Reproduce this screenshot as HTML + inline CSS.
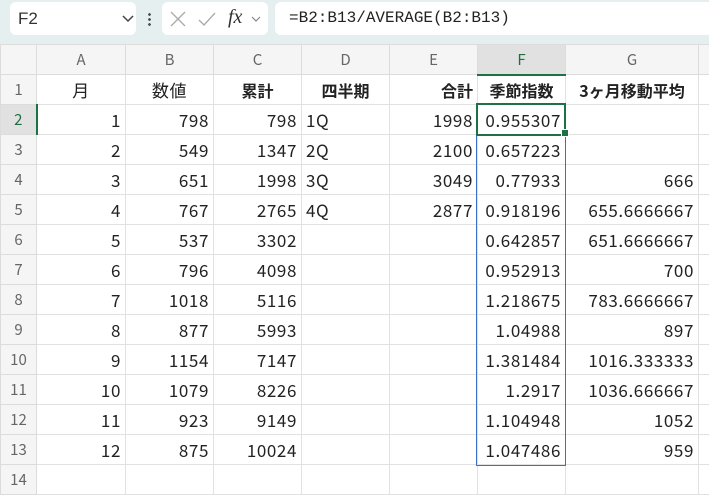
<!DOCTYPE html><html><head><meta charset="utf-8"><style>
body{margin:0;width:709px;height:473px;overflow:hidden;background:#fff;font-family:"Liberation Sans","Noto Sans CJK JP",sans-serif;position:relative}
.bar{position:absolute;left:0;top:0;width:709px;height:44px;background:#e6eff0}
.box{position:absolute;top:2px;height:33px;background:#fff;border-radius:6px}
table{position:absolute;left:0;top:44px;border-collapse:collapse;table-layout:fixed;width:718px}
td{height:30px;border:1px solid #e1e1e1;padding:0 4px;font-size:17px;letter-spacing:0.6px;color:#222;white-space:nowrap;overflow:hidden;text-align:right;font-family:"Noto Sans CJK JP",sans-serif;box-sizing:border-box}
tr.h td{background:#f5f5f5;color:#666;text-align:center;font-size:15px;letter-spacing:0;border-color:#dcdcdc}
td.rh{background:#f5f5f5;color:#666;text-align:center;font-size:15px;letter-spacing:0;border-color:#dcdcdc;padding:0}
td.c{text-align:center}td.l{text-align:left}td.b{font-weight:bold;text-align:center;letter-spacing:0;font-size:16px}
</style></head><body>
<div class="bar">
<div class="box" style="left:10px;width:126px"><span style="position:absolute;left:8px;top:7px;font-size:17px;color:#333">F2</span><svg style="position:absolute;left:112px;top:13px" width="12" height="8"><path d="M1 1l5 5 5-5" stroke="#444" fill="none" stroke-width="1.5"/></svg></div>
<div style="position:absolute;left:148px;top:12px;width:3px;height:14px;background:radial-gradient(circle,#555 1.3px,transparent 1.5px) 0 0/3px 5px"></div>
<div class="box" style="left:162px;width:106px"><svg style="position:absolute;left:8px;top:9px" width="16" height="16"><path d="M1 1l14 14M15 1L1 15" stroke="#aaa" stroke-width="1.3"/></svg><svg style="position:absolute;left:36px;top:9px" width="18" height="16"><path d="M1 9l5 5L17 2" stroke="#aaa" fill="none" stroke-width="1.3"/></svg><span style="position:absolute;left:66px;top:4px;font-family:'Liberation Serif',serif;font-style:italic;font-size:20px;color:#333">fx</span><svg style="position:absolute;left:89px;top:14px" width="10" height="7"><path d="M1 1l4 4 4-4" stroke="#888" fill="none" stroke-width="1.2"/></svg></div>
<div class="box" style="left:275px;width:440px"><span style="position:absolute;left:14px;top:7px;font-family:'Liberation Mono',monospace;font-size:16px;color:#222">=B2:B13/AVERAGE(B2:B13)</span></div>
</div>
<table>
<colgroup><col style="width:36px"><col style="width:89px"><col style="width:88px"><col style="width:88px"><col style="width:88px"><col style="width:88px"><col style="width:88px"><col style="width:133px"><col style="width:20px"></colgroup>
<tr class="h"><td style="background:#f5f5f5"></td><td>A</td><td>B</td><td>C</td><td>D</td><td>E</td><td style="background:#e1e1e1;color:#1e6e3e;border-bottom:2px solid #1e7145">F</td><td>G</td><td></td></tr>
<tr><td class="rh">1</td><td class="c">月</td><td class="c">数値</td><td class="b">累計</td><td class="b">四半期</td><td class="b" style="text-align:right">合計</td><td class="b">季節指数</td><td class="b">3ヶ月移動平均</td><td></td></tr>
<tr><td class="rh" style="background:#e1e1e1;color:#1e6e3e;border-right:2px solid #1e7145">2</td><td>1</td><td>798</td><td>798</td><td class="l">1Q</td><td>1998</td><td>0.955307</td><td></td><td></td></tr>
<tr><td class="rh">3</td><td>2</td><td>549</td><td>1347</td><td class="l">2Q</td><td>2100</td><td>0.657223</td><td></td><td></td></tr>
<tr><td class="rh">4</td><td>3</td><td>651</td><td>1998</td><td class="l">3Q</td><td>3049</td><td>0.77933</td><td>666</td><td></td></tr>
<tr><td class="rh">5</td><td>4</td><td>767</td><td>2765</td><td class="l">4Q</td><td>2877</td><td>0.918196</td><td>655.6666667</td><td></td></tr>
<tr><td class="rh">6</td><td>5</td><td>537</td><td>3302</td><td></td><td></td><td>0.642857</td><td>651.6666667</td><td></td></tr>
<tr><td class="rh">7</td><td>6</td><td>796</td><td>4098</td><td></td><td></td><td>0.952913</td><td>700</td><td></td></tr>
<tr><td class="rh">8</td><td>7</td><td>1018</td><td>5116</td><td></td><td></td><td>1.218675</td><td>783.6666667</td><td></td></tr>
<tr><td class="rh">9</td><td>8</td><td>877</td><td>5993</td><td></td><td></td><td>1.04988</td><td>897</td><td></td></tr>
<tr><td class="rh">10</td><td>9</td><td>1154</td><td>7147</td><td></td><td></td><td>1.381484</td><td>1016.333333</td><td></td></tr>
<tr><td class="rh">11</td><td>10</td><td>1079</td><td>8226</td><td></td><td></td><td>1.2917</td><td>1036.666667</td><td></td></tr>
<tr><td class="rh">12</td><td>11</td><td>923</td><td>9149</td><td></td><td></td><td>1.104948</td><td>1052</td><td></td></tr>
<tr><td class="rh">13</td><td>12</td><td>875</td><td>10024</td><td></td><td></td><td>1.047486</td><td>959</td><td></td></tr>
<tr><td class="rh">14</td><td></td><td></td><td></td><td></td><td></td><td></td><td></td><td></td></tr>
</table>
<div style="position:absolute;left:476px;top:104px;width:88px;height:360px;border:1px solid #3a6fd0"></div>
<div style="position:absolute;left:476px;top:103px;width:86px;height:29px;border:2px solid #1e7145"></div>
<div style="position:absolute;left:561px;top:129px;width:6px;height:6px;background:#1e7145;border:1px solid #fff"></div>
</body></html>
